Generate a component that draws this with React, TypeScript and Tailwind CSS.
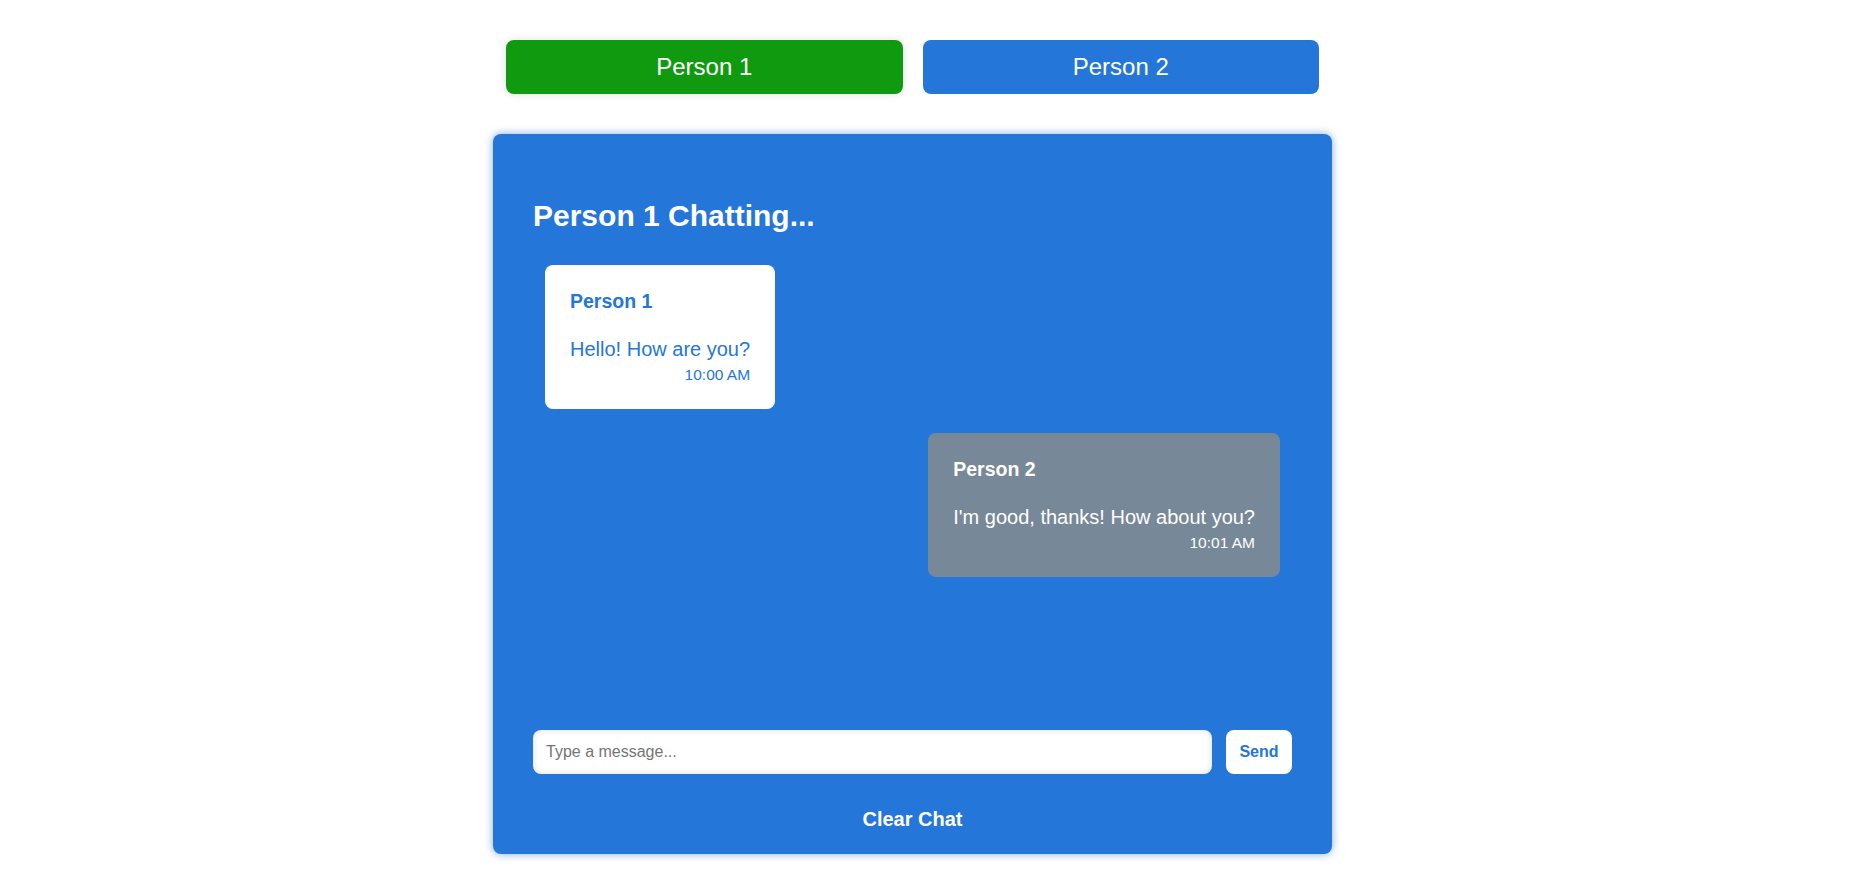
import React from "react";

export default function App() {
  return (
    <div className="min-h-screen w-full bg-white font-['Liberation_Sans',Arial,sans-serif]">
      <div className="pl-[493px] pt-[40px]">
        <div className="w-[839px]">
          <div className="mx-[13px] flex gap-[20px]">
            <button className="flex-1 h-[54px] rounded-lg bg-[#109a10] text-white text-[24px] shadow-[0_0_10px_rgba(0,0,0,0.12)]">
              Person 1
            </button>
            <button className="flex-1 h-[54px] rounded-lg bg-[#2576d9] text-white text-[24px]">
              Person 2
            </button>
          </div>

          <div className="mt-[40px] h-[720px] rounded-lg bg-[#2576d9] shadow-[0_0_8px_rgba(37,118,217,0.6)] px-[40px] pt-[65px] pb-[23px] flex flex-col">
            <h2 className="text-[30px] leading-[34px] font-bold text-white">
              Person 1 Chatting...
            </h2>

            <div className="flex-1 flex flex-col gap-[24px] pt-[32px] px-[12px]">
              <div className="self-start rounded-lg bg-white px-[25px] pt-[25px] pb-[25px]">
                <div className="text-[19.5px] leading-[22px] font-bold text-[#2576d9]">Person 1</div>
                <div className="mt-[25px] text-[20px] leading-[24px] text-[#2576d9]">Hello! How are you?</div>
                <div className="mt-[5px] text-right text-[15.5px] leading-[18px] text-[#2576d9]">10:00 AM</div>
              </div>
              <div className="self-end rounded-lg bg-[#778899] px-[25px] pt-[25px] pb-[25px]">
                <div className="text-[19.5px] leading-[22px] font-bold text-white">Person 2</div>
                <div className="mt-[25px] text-[20px] leading-[24px] text-white">I'm good, thanks! How about you?</div>
                <div className="mt-[5px] text-right text-[15.5px] leading-[18px] text-white">10:01 AM</div>
              </div>
            </div>

            <div className="flex gap-[14px]">
              <input
                type="text"
                placeholder="Type a message..."
                className="flex-1 h-[44px] rounded-lg bg-white px-[13px] text-[16px] text-[#333] placeholder:text-[#757575] outline-none shadow-[inset_0_0_6px_rgba(0,0,0,0.15)]"
              />
              <button className="w-[66px] h-[44px] rounded-lg bg-white text-[#2576d9] text-[16px] font-bold">
                Send
              </button>
            </div>

            <div className="mt-[33px] flex justify-center">
              <button className="block text-[20px] leading-[24px] font-bold text-white">Clear Chat</button>
            </div>
          </div>
        </div>
      </div>
    </div>
  );
}
